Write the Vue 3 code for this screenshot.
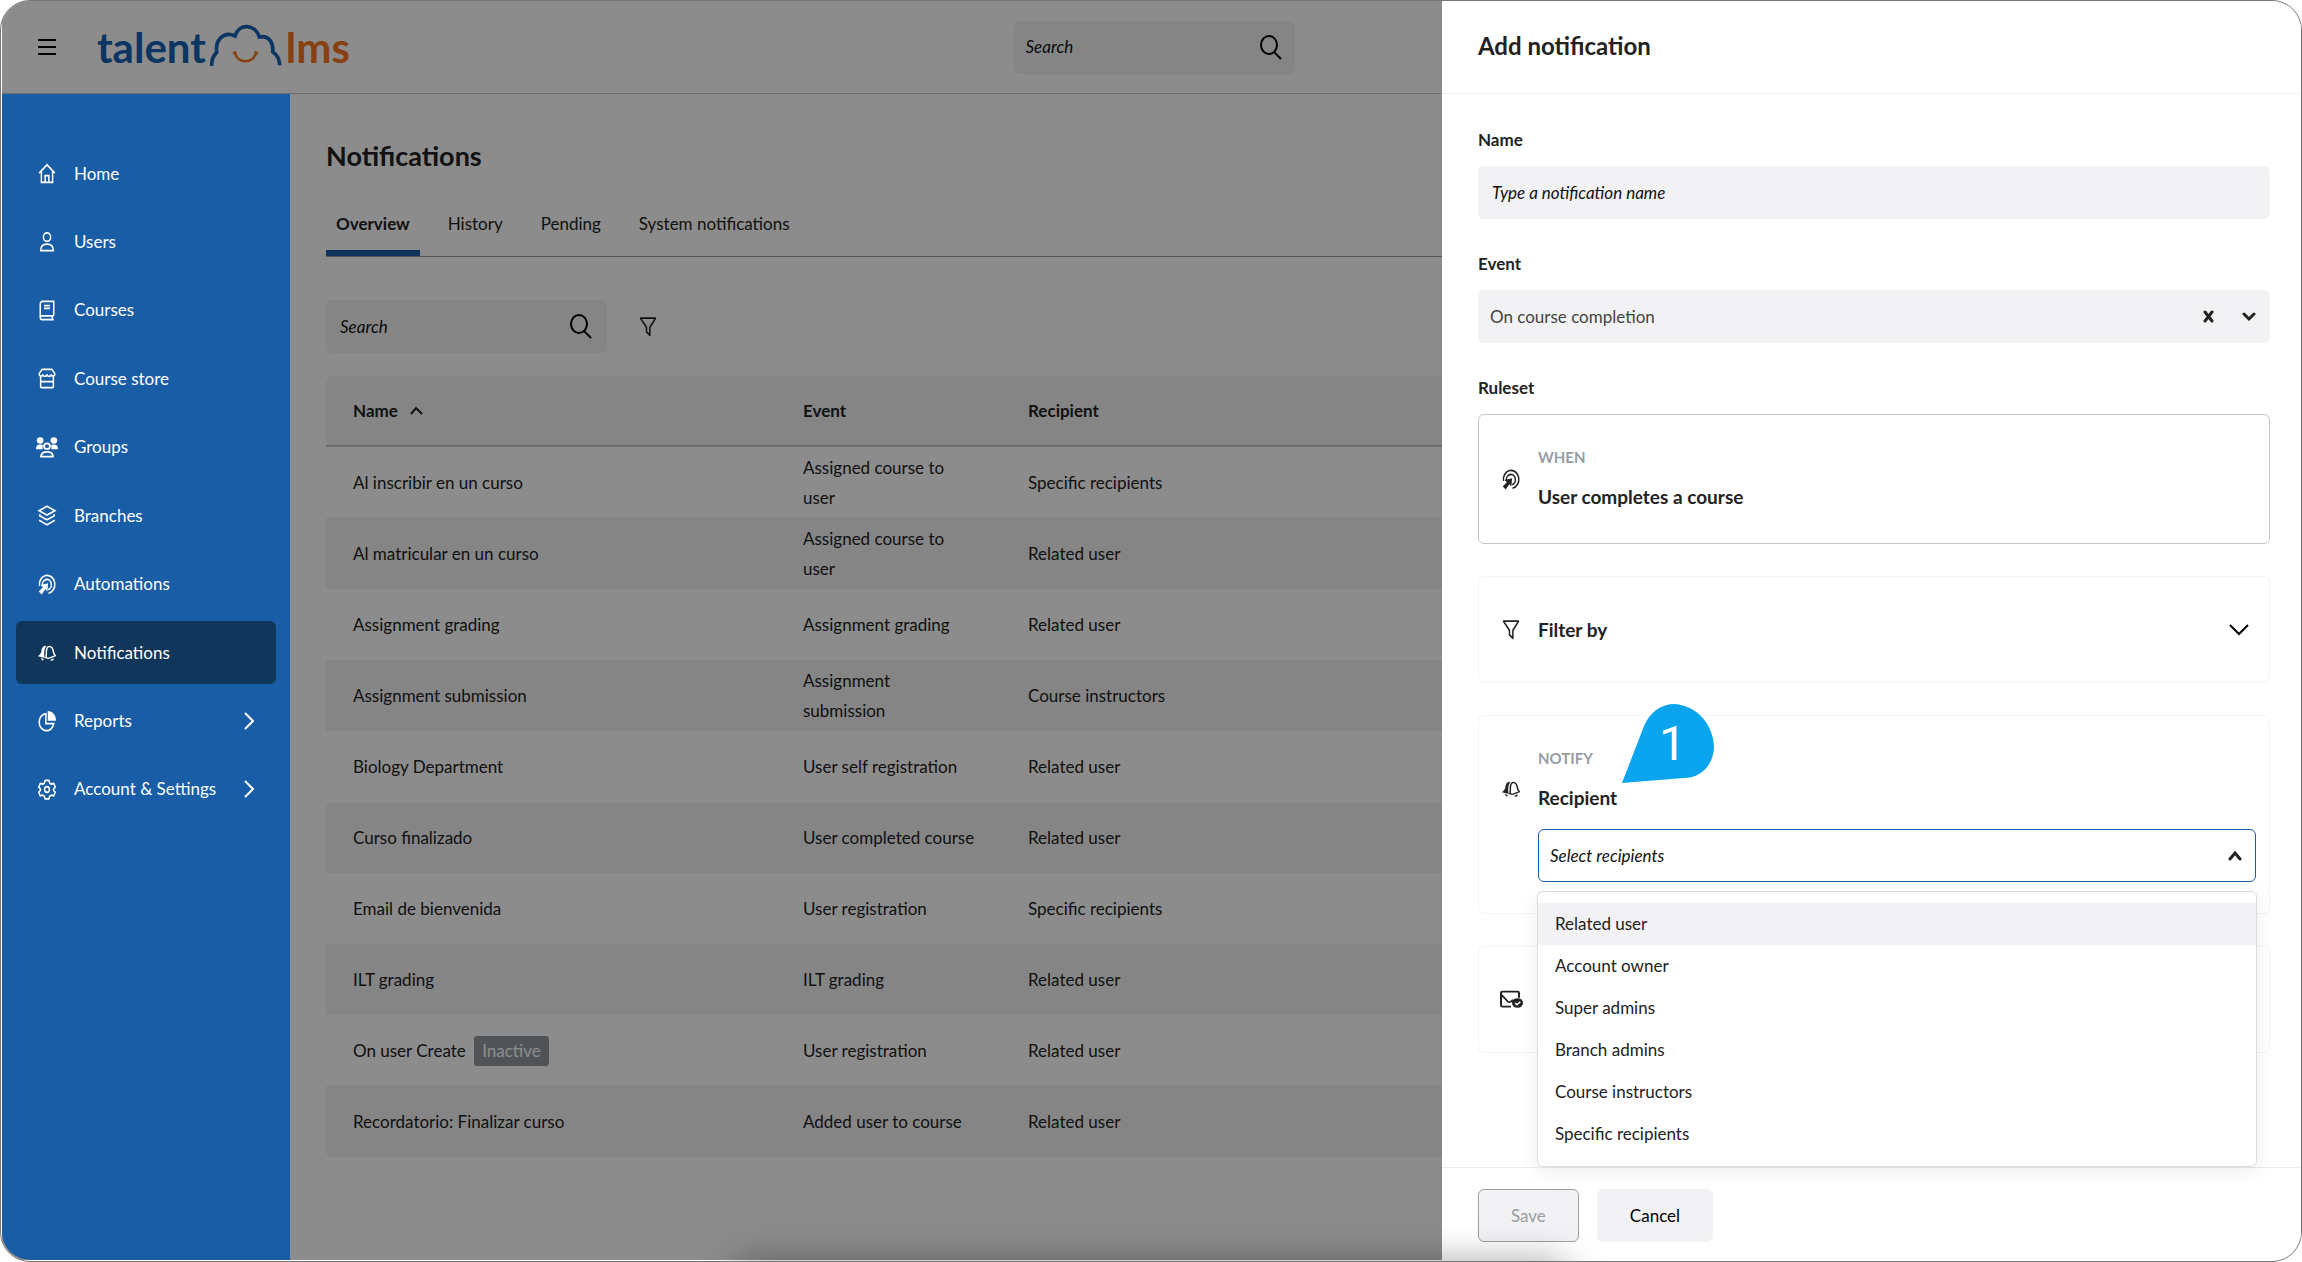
<script setup>
import { ref } from 'vue'

const icons = {
  home: '<path d="M1.5 11.5 12 2l10.500 9.500M4.500 9.500V22h15V9.500M9.500 22v-7.500h5V22"/>',
  user: '<circle cx="12" cy="7" r="4.800"/><path d="M3.500 22.500c0-5 3-7.500 8.500-7.500s8.500 2.500 8.500 7.500z"/>',
  book: '<path d="M21 18V1.500H6a3 3 0 0 0-3 3v15.500a2.500 2.500 0 0 0 2.500 2.500H21M21 18H5.500A2.300 2.300 0 0 0 3 20.200M19 18v4.500M8 6.500h8M8 9.500h8"/>',
  store: '<path d="M5.500 1.500h13L22.500 6.500c0 3-3.500 3.500-5 1.500-1.500 2-4 2-5.500 0-1.500 2-4 2-5.500 0-1.500 2-5 1.500-5-1.500zM3.500 10v10.500a2 2 0 0 0 2 2h13a2 2 0 0 0 2-2V10M3.500 15.500h17"/>',
  groups: '<g fill="currentColor" stroke="none"><circle cx="4.500" cy="4" r="3.600"/><circle cx="19.500" cy="4" r="3.600"/><path d="M0 14c0-4 1.500-5.500 4.500-5.500 1.500 0 2.500.300 3.200 1C7 11 7 12.500 7.500 14zM24 14c0-4-1.500-5.500-4.500-5.500-1.500 0-2.500.300-3.200 1 .700 1.500.700 3 .200 4.500z"/></g><circle cx="12" cy="10.500" r="3.200"/><path d="M5.500 22.500c0-4 2.200-5.500 6.500-5.500s6.500 1.500 6.500 5.500z"/>',
  layers: '<path d="m12 1.500 10.500 5L12 11.500l-10.500-5zM1.500 12 12 17l10.500-5M1.500 17.500l10.500 5 10.500-5M1.500 12l2-1M22.500 12l-2-1"/>',
  target: '<path d="M2 13.500a10.300 10.300 0 1 1 12 8.500M6 13.500a6 6 0 1 1 7.500 4.500"/><path d="M13.500 10.500 12.500 20l-2.700-2.700L5 23.500 1 20l5.500-5-3-2.500z" fill="currentColor" stroke="none"/>',
  bell: '<path d="M11 1C6 1 5 5 4.500 9.500c-.300 3-2 5-4.500 7.500l9 2.500C7.500 13 8 6 11 1zM3.500 19.500l4.500 1.500-2 2.500z" fill="currentColor" stroke="none"/><path d="M10.500 19c1-3 .300-7 .800-11C11.800 3 14 1.500 16.500 2.500s3.500 4 4 7.500c.300 2.500 1 4 2.500 6L14.500 20zM10.500 19l4 1M17 22.500c1.500.500 3 0 3.500-2"/>',
  pie: '<path d="M10.500 3A9.800 9.800 0 1 0 21 14.500H10.500z"/><path d="M13 0c6 0 11 4.500 11 11H13z" fill="currentColor" stroke="none"/>',
  gear: '<circle cx="12" cy="12" r="3.200"/><path d="M9.500 1.500h5l1 3.200 2.200 1.200 3.300-.900 2 4.200-2.300 2.300v1.500l2.300 2-2 4.300-3.300-.800-2.200 1.300-1 3h-5l-1-3-2.200-1.300-3.300.800-2-4.300 2.300-2v-1.500L1 9.200 3 5l3.300.900 2.200-1.200z" stroke-linejoin="round"/>',
  funnel: '<path d="M2 2.500h20l-7.500 10.500v9l-4.500-4v-5z" stroke-linejoin="round"/>',
  mail: '<path d="M20 10V4.500A1.500 1.500 0 0 0 18.500 3h-15A1.500 1.500 0 0 0 2 4.500v14A1.500 1.500 0 0 0 3.500 20H12M2 6l7 8.500c1 .800 2 .800 3 0l2-2"/><circle cx="18.500" cy="16" r="5.500" fill="currentColor" stroke="none"/><path d="m16 16 2 2 3.300-3.500" stroke="#fff" stroke-width="1.500"/>',
}

const nav = [
  { icon: 'home', label: 'Home' },
  { icon: 'user', label: 'Users' },
  { icon: 'book', label: 'Courses' },
  { icon: 'store', label: 'Course store' },
  { icon: 'groups', label: 'Groups' },
  { icon: 'layers', label: 'Branches' },
  { icon: 'target', label: 'Automations' },
  { icon: 'bell', label: 'Notifications', active: true },
  { icon: 'pie', label: 'Reports', more: true },
  { icon: 'gear', label: 'Account & Settings', more: true },
]

const tabs = ['Overview', 'History', 'Pending', 'System notifications']

const rows = [
  { name: 'Al inscribir en un curso', event: 'Assigned course to user', recipient: 'Specific recipients' },
  { name: 'Al matricular en un curso', event: 'Assigned course to user', recipient: 'Related user' },
  { name: 'Assignment grading', event: 'Assignment grading', recipient: 'Related user' },
  { name: 'Assignment submission', event: 'Assignment submission', recipient: 'Course instructors' },
  { name: 'Biology Department', event: 'User self registration', recipient: 'Related user' },
  { name: 'Curso finalizado', event: 'User completed course', recipient: 'Related user' },
  { name: 'Email de bienvenida', event: 'User registration', recipient: 'Specific recipients' },
  { name: 'ILT grading', event: 'ILT grading', recipient: 'Related user' },
  { name: 'On user Create', event: 'User registration', recipient: 'Related user', inactive: true },
  { name: 'Recordatorio: Finalizar curso', event: 'Added user to course', recipient: 'Related user' },
]

const options = ['Related user', 'Account owner', 'Super admins', 'Branch admins', 'Course instructors', 'Specific recipients']

const event = ref('On course completion')
</script>

<template>
  <div class="shell">
    <header class="topbar">
      <div class="brand">
        <button class="plain menu" type="button" aria-label="Menu">
          <svg width="18" height="18" viewBox="0 0 18 18"><path d="M0 2h18M0 9h18M0 16h18" stroke="#000" stroke-width="2" /></svg>
        </button>
        <a class="logo" href="#" aria-label="talentlms">
          <span class="talent">talent</span>
          <svg class="cloud" width="74" height="43" viewBox="386 38 222 129" fill="none" stroke="#1562b2" stroke-width="11">
            <path d="M394 164C393 146 398 134 409 123 404 84 432 58 464 74 476 34 525 38 537 77 564 71 580 92 577 121 592 132 598 146 598 162" />
            <path d="M458 127l10-5M523 122l10 5M464 125C472 158 518 158 527 125" stroke="#f8761f" stroke-width="8" />
          </svg>
          <span class="lms">lms</span>
        </a>
      </div>
      <label class="search">
        <input type="text" placeholder="Search" aria-label="Search" />
        <svg width="22" height="25" viewBox="0 0 22 25" fill="none" stroke="#000" stroke-width="2"><ellipse cx="9" cy="10" rx="8" ry="9" /><path d="m14 17 7 7" /></svg>
      </label>
      <span></span>
    </header>

    <div class="page">
      <nav class="sidebar">
        <div class="nav-list">
          <a v-for="item in nav" :key="item.label" href="#" class="nav-item" :class="{ active: item.active }">
            <svg class="icon" :class="item.icon" viewBox="0 0 24 24" preserveAspectRatio="none" v-html="icons[item.icon]"></svg>
            <span>{{ item.label }}</span>
            <svg v-if="item.more" class="more" width="10" height="18" viewBox="0 0 10 18"><path d="m1 1 8 8-8 8" /></svg>
          </a>
        </div>
      </nav>

      <main class="content">
        <h1>Notifications</h1>
        <div class="tabs" role="tablist">
          <button v-for="(tab, i) in tabs" :key="tab" type="button" role="tab" class="plain tab" :class="{ current: i === 0 }">{{ tab }}</button>
        </div>
        <div class="tools">
          <label class="search">
            <input type="text" placeholder="Search" aria-label="Search notifications" />
            <svg width="22" height="25" viewBox="0 0 22 25" fill="none" stroke="#000" stroke-width="2"><ellipse cx="9" cy="10" rx="8" ry="9" /><path d="m14 17 7 7" /></svg>
          </label>
          <button class="plain" type="button" aria-label="Filter">
            <svg class="icon" viewBox="0 0 24 24" preserveAspectRatio="none" v-html="icons.funnel"></svg>
          </button>
        </div>
        <table>
          <colgroup>
            <col class="col-name" />
            <col class="col-event" />
            <col />
          </colgroup>
          <thead>
            <tr>
              <th>Name <svg class="sort" width="13" height="8" viewBox="0 0 13 8" fill="none" stroke="#222" stroke-width="2"><path d="m1 7 5-6 6 6" /></svg></th>
              <th>Event</th>
              <th>Recipient</th>
            </tr>
          </thead>
          <tbody>
            <tr v-for="row in rows" :key="row.name">
              <td>{{ row.name }} <span v-if="row.inactive" class="badge">Inactive</span></td>
              <td>{{ row.event }}</td>
              <td>{{ row.recipient }}</td>
            </tr>
          </tbody>
        </table>
      </main>
    </div>

    <div class="backdrop"></div>

    <aside class="panel" role="dialog" aria-labelledby="panel-title">
      <header class="panel-head"><h2 id="panel-title">Add notification</h2></header>
      <div class="panel-body">
        <div class="field">
          <label class="caption" for="name">Name</label>
          <input id="name" class="control" type="text" placeholder="Type a notification name" />
        </div>
        <div class="field">
          <label class="caption" for="event">Event</label>
          <div class="control-wrap">
            <select id="event" v-model="event" class="control event">
              <option>On course completion</option>
            </select>
            <div class="adorn">
              <button class="plain" type="button" aria-label="Clear">
                <svg width="11" height="13" viewBox="0 0 11 13"><path d="m2 2 7 9M9 2 2 11" stroke="#222" stroke-width="3" stroke-linecap="round" /></svg>
              </button>
              <svg width="14" height="10" viewBox="0 0 14 10" fill="none" stroke="#222" stroke-width="3" stroke-linecap="round"><path d="m2 2 5 5 5-5" /></svg>
            </div>
          </div>
        </div>
        <div class="caption">Ruleset</div>
        <div class="cards">
          <section class="card when">
            <svg class="icon" viewBox="0 0 24 24" preserveAspectRatio="none" v-html="icons.target"></svg>
            <div class="summary">
              <div class="kicker">WHEN</div>
              <h3>User completes a course</h3>
            </div>
          </section>
          <section class="card">
            <svg class="icon" viewBox="0 0 24 24" preserveAspectRatio="none" v-html="icons.funnel"></svg>
            <h3>Filter by</h3>
            <button class="plain expand" type="button" aria-label="Expand filters">
              <svg width="20" height="12" viewBox="0 0 20 12" fill="none" stroke="#000" stroke-width="2"><path d="m1 1 9 9 9-9" /></svg>
            </button>
          </section>
          <section class="card notify">
            <svg class="icon bell" viewBox="0 0 24 24" preserveAspectRatio="none" v-html="icons.bell"></svg>
            <div class="grow">
              <div class="kicker">NOTIFY</div>
              <h3><label for="recipient">Recipient</label></h3>
              <div class="control-wrap combo">
                <input id="recipient" class="control outlined" role="combobox" aria-expanded="true" aria-controls="recipients" placeholder="Select recipients" />
                <div class="adorn">
                  <svg width="14" height="10" viewBox="0 0 14 10" fill="none" stroke="#222" stroke-width="3" stroke-linecap="round"><path d="m2 8 5-6 5 6" /></svg>
                </div>
                <ul id="recipients" class="options" role="listbox">
                  <li v-for="(option, i) in options" :key="option" role="option" :class="{ hover: i === 0 }">{{ option }}</li>
                </ul>
              </div>
            </div>
            <div class="marker">
              <svg width="92" height="79" viewBox="0 0 92 79"><path d="M0 79 22 22C28 8 39 0 53 0c22 2 38 20 39 42 0 20-14 32-30 32z" fill="#0aa5ee" /></svg>
              <span>1</span>
            </div>
          </section>
          <section class="card">
            <svg class="icon mail" viewBox="0 0 24 24" preserveAspectRatio="none" v-html="icons.mail"></svg>
          </section>
        </div>
      </div>
      <footer class="panel-foot">
        <button type="button" class="btn save" disabled>Save</button>
        <button type="button" class="btn">Cancel</button>
      </footer>
    </aside>

    <div class="glow"></div>
  </div>
</template>

<style>
body {
  margin: 0;
  background: #fff;
}
</style>

<style scoped>
.shell,
.shell * {
  box-sizing: border-box;
}
.shell {
  position: relative;
  display: flex;
  flex-direction: column;
  min-height: 100vh;
  padding: 0 1px 1px;
  border: 1px solid #777;
  border-radius: 30px;
  overflow: hidden;
  background: #fff;
  color: #222;
  font: 17px/30px Lato, "Open Sans", sans-serif;
}
h1, h2, h3, ul { margin: 0; padding: 0; }
input, select, button { font: inherit; color: inherit; }
.plain {
  display: flex;
  padding: 0;
  border: 0;
  background: none;
}
.icon {
  flex: none;
  width: 18px;
  height: 21px;
  overflow: visible;
  fill: none;
  stroke: currentColor;
  stroke-width: 2;
}
.icon.bell { height: 16px; }
.icon.mail { width: 24px; }
.icon.groups {
  width: 22px;
  margin: 0 -2px;
}

/* Top bar */
.topbar {
  display: grid;
  grid-template-columns: 1fr auto 1fr;
  align-items: center;
  height: 93px;
  padding-left: 6px;
  border-bottom: 1px solid #c8c8c8;
}
.brand {
  display: flex;
  align-items: center;
  gap: 41px;
  padding-left: 30px;
}
.logo {
  display: flex;
  align-items: center;
  gap: 3px;
  font-size: 42px;
  font-weight: 700;
  line-height: 48px;
  text-decoration: none;
}
.cloud { margin-bottom: 4px; }
.talent { color: #1562b2; }
.lms { color: #f8761f; }
.search {
  display: flex;
  align-items: center;
  width: 281px;
  height: 53px;
  padding: 0 13px 0 12px;
  border-radius: 6px;
  background: #f2f2f4;
}
.search input {
  flex: 1;
  min-width: 0;
  padding: 0;
  border: 0;
  background: none;
}
input::placeholder {
  color: #111;
  font-style: italic;
  opacity: 1;
}

/* Sidebar */
.page {
  display: flex;
  flex: 1;
}
.sidebar {
  position: relative;
  z-index: 2;
  flex: none;
  width: 288px;
  padding: 48px 14px;
  border-bottom-left-radius: 28px;
  background: #185da5;
}
.nav-list {
  display: flex;
  flex-direction: column;
  justify-content: space-between;
  min-height: 679px;
}
.nav-item {
  display: flex;
  align-items: center;
  gap: 18px;
  height: 63px;
  padding: 0 22px;
  border-radius: 6px;
  color: #fff;
  text-decoration: none;
}
.nav-item.active { background: #11365b; }
.more {
  margin-left: auto;
  fill: none;
  stroke: #fff;
  stroke-width: 2;
}

/* Main content */
.content {
  flex: 1;
  min-width: 0;
  padding: 42px 36px;
}
h1 {
  font-size: 27px;
  line-height: 40px;
}
.tabs {
  display: flex;
  gap: 18px;
  margin-top: 33px;
  border-bottom: 1px solid #8f9bab;
}
.tab {
  padding: 0 10px 11px;
  border-bottom: 6px solid transparent;
}
.tab.current {
  border-color: #185da5;
  font-weight: 700;
}
.tools {
  display: flex;
  align-items: center;
  gap: 32px;
  margin: 43px 0 23px;
}
.content .search { padding: 0 15px 0 14px; }
table {
  width: 100%;
  table-layout: fixed;
  border-collapse: separate;
  border-spacing: 0;
  border-radius: 6px;
  overflow: hidden;
}
.col-name { width: 450px; }
.col-event { width: 225px; }
th, td {
  height: 71px;
  padding: 0 25px 0 27px;
  text-align: left;
}
thead th {
  border-bottom: 2px solid #c0c8c8;
  background: #f2f2f4;
}
tbody tr:nth-child(even) { background: #f2f2f4; }
.sort {
  margin-left: 8px;
  vertical-align: 2px;
}
.badge {
  display: inline-block;
  margin-left: 4px;
  padding: 0 8px;
  border-radius: 3px;
  background: #939a9f;
  color: #fff;
}
.backdrop {
  position: absolute;
  inset: 0 1px 1px;
  background: rgba(0, 0, 0, .45);
}

/* Panel */
.panel {
  position: absolute;
  z-index: 3;
  inset: 0 0 1px auto;
  display: flex;
  flex-direction: column;
  width: 37.35%;
  background: #fff;
}
.panel-head {
  display: flex;
  align-items: center;
  height: 93px;
  padding: 0 36px 2px;
  border-bottom: 1px solid #f2f2f4;
}
h2 {
  font-size: 24px;
  line-height: 40px;
}
.panel-body {
  flex: 1;
  padding: 34px 31px 0 36px;
}
.field { margin-bottom: 33px; }
.caption {
  display: block;
  margin-bottom: 14px;
  font-weight: 700;
  line-height: 24px;
}
.control {
  display: block;
  width: 100%;
  height: 53px;
  padding: 0 14px;
  border: 0;
  border-radius: 6px;
  outline: 0;
  background: #f2f2f4;
  appearance: none;
}
.control.event {
  padding: 0 12px;
  color: #444;
}
.control.outlined {
  padding: 0 11px;
  border: 1px solid #185da5;
  background: #fff;
}
.control-wrap { position: relative; }
.adorn {
  position: absolute;
  inset: 0 14px 0 auto;
  display: flex;
  align-items: center;
  gap: 28px;
}
.cards {
  display: flex;
  flex-direction: column;
  gap: 32px;
}
.card {
  position: relative;
  display: flex;
  align-items: center;
  gap: 18px;
  min-height: 107px;
  padding: 0 20px 0 23px;
  border: 1px solid #f4f4f5;
  border-radius: 6px;
}
.card.when {
  min-height: 130px;
  border-color: #c4c7c9;
}
.summary { padding-bottom: 5px; }
.card:last-child { padding-left: 20px; }
.card.notify {
  align-items: flex-start;
  padding: 23px 13px 31px 23px;
}
.notify > .icon { margin-top: 42px; }
.grow { flex: 1; }
.kicker {
  color: #969da2;
  font-size: 15px;
  font-weight: 700;
  line-height: 39px;
}
h3 {
  font-size: 19px;
  line-height: 39px;
}
.expand { margin-left: auto; }
.combo { margin-top: 12px; }
.options {
  position: absolute;
  z-index: 1;
  top: 62px;
  left: -1px;
  right: -1px;
  padding: 11px 0;
  border: 1px solid #dcdcde;
  border-radius: 6px;
  background: #fff;
  box-shadow: 0 4px 20px rgba(0, 0, 0, .08);
  list-style: none;
}
.options li {
  padding: 0 17px;
  line-height: 42px;
}
.options .hover { background: #f2f2f4; }
.marker {
  position: absolute;
  top: -12px;
  left: 143px;
  display: flex;
}
.marker span {
  position: absolute;
  inset: 0 0 0 9px;
  color: #fff;
  font: 48px/80px Roboto, sans-serif;
  text-align: center;
}
.panel-foot {
  display: flex;
  gap: 18px;
  padding: 21px 36px 18px;
  border-top: 1px solid #ececee;
}
.btn {
  height: 53px;
  padding: 0 32px;
  border: 1px solid #f2f2f4;
  border-radius: 6px;
  background: #f2f2f4;
  color: #000;
}
.btn.save {
  border-color: #9aa1a7;
  color: #969da2;
}

/* Soft shade rising from the lower edge */
.glow {
  position: absolute;
  z-index: 4;
  top: 100%;
  left: 32%;
  width: 36%;
  height: 40px;
  box-shadow: 0 0 36px rgba(0, 0, 0, .35);
  pointer-events: none;
}
</style>
